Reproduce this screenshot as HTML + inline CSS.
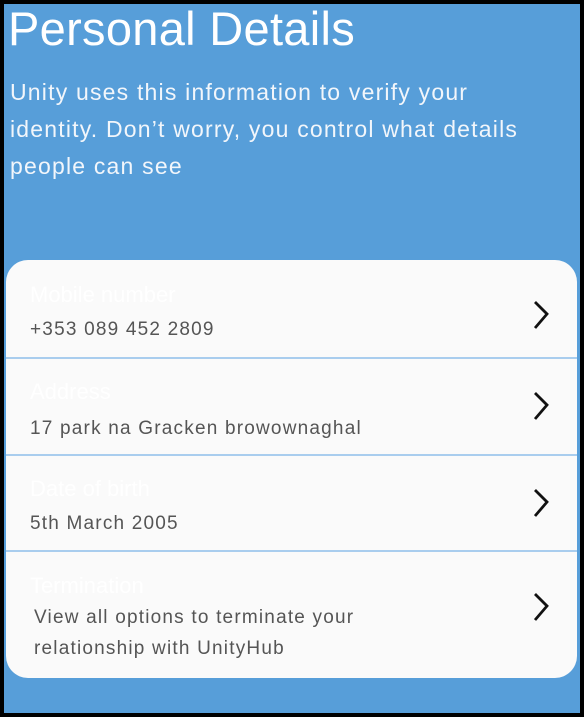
<!DOCTYPE html>
<html><head><meta charset="utf-8"><style>
*{margin:0;padding:0;box-sizing:border-box}
html,body{width:584px;height:717px;background:#000;overflow:hidden}
.frame{position:absolute;left:4px;top:4px;width:576px;height:709px;background:#579ed9;font-family:"Liberation Sans",sans-serif;color:#fff}
h1{position:absolute;left:4px;top:0px;font-size:47px;font-weight:normal;line-height:50px;letter-spacing:0.3px}
p.sub{position:absolute;left:6px;top:70px;width:560px;font-size:23px;line-height:37px;color:#f2f6fb;letter-spacing:1.2px}
.card{position:absolute;left:2px;top:256px;width:571px;height:418px;background:#fafafa;border-radius:22px;overflow:hidden}
.row{position:absolute;left:0;width:100%;border-bottom:2px solid #a9cdee}
.row:last-child{border-bottom:none}
.lbl{position:absolute;left:24px;font-size:22px;color:#fff}
.val{position:absolute;left:24px;font-size:19px;color:#555;line-height:31px;letter-spacing:1.2px}
svg{position:absolute;left:525px}
</style></head><body><div class="frame">
<h1>Personal Details</h1>
<p class="sub">Unity uses this information to verify your<br>identity. Don’t worry, you control what details<br>people can see</p>
<div class="card">
 <div class="row" style="top:0;height:99px"><div class="lbl" style="top:22px">Mobile number</div><div class="val" style="top:54px">+353 089 452 2809</div><svg style="top:40px" width="20" height="30" viewBox="0 0 20 30"><path d="M4 2 L16 14 L4 28" fill="none" stroke="#111" stroke-width="2.8"/></svg></div>
 <div class="row" style="top:99px;height:97px"><div class="lbl" style="top:20px">Address</div><div class="val" style="top:54px">17 park na Gracken browownaghal</div><svg style="top:32px" width="20" height="30" viewBox="0 0 20 30"><path d="M4 2 L16 14 L4 28" fill="none" stroke="#111" stroke-width="2.8"/></svg></div>
 <div class="row" style="top:196px;height:96px"><div class="lbl" style="top:20px">Date of birth</div><div class="val" style="top:52px">5th March 2005</div><svg style="top:32px" width="20" height="30" viewBox="0 0 20 30"><path d="M4 2 L16 14 L4 28" fill="none" stroke="#111" stroke-width="2.8"/></svg></div>
 <div class="row" style="top:292px;height:126px"><div class="lbl" style="top:21px">Termination</div><div class="val" style="top:50px;left:28px;width:400px">View all options to terminate your<br>relationship with UnityHub</div><svg style="top:40px" width="20" height="30" viewBox="0 0 20 30"><path d="M4 2 L16 14 L4 28" fill="none" stroke="#111" stroke-width="2.8"/></svg></div>
</div>
</div></body></html>
